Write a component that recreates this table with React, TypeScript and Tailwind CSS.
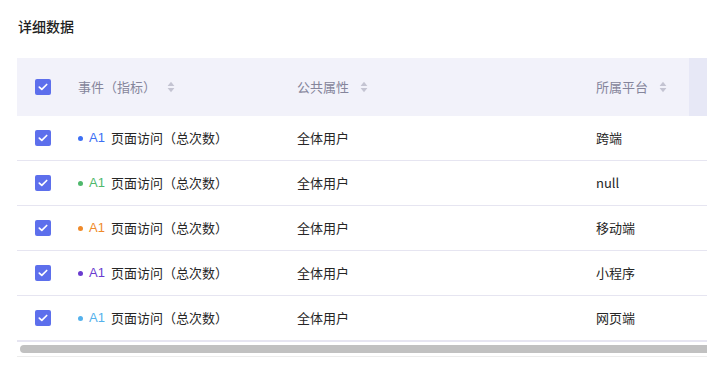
import React from 'react';

const font = { fontFamily: '"PingFang SC", "Noto Sans CJK SC", "Liberation Sans", sans-serif' };

const Check = () => (
  <span className="flex h-4 w-4 items-center justify-center rounded-[2px] bg-[#5d6fec]">
    <svg width="10" height="8" viewBox="0 0 10 8" fill="none">
      <path d="M1.3 4.1 3.8 6.4 8.7 1.5" stroke="#fff" strokeWidth="1.7" strokeLinecap="round" strokeLinejoin="round" />
    </svg>
  </span>
);

const Sorter = () => (
  <svg width="8" height="12" viewBox="0 0 8 12" className="ml-[11px]">
    <path d="M4 0.8 7.4 5H0.6z" fill="#c4c4d2" />
    <path d="M4 11.2 7.4 7H0.6z" fill="#c4c4d2" />
  </svg>
);

const App = () => {
  const rows = [
    { color: 'text-[#3d6ff4]', dot: 'bg-[#3d6ff4]', platform: '跨端' },
    { color: 'text-[#4fb86c]', dot: 'bg-[#4fb86c]', platform: 'null' },
    { color: 'text-[#ef8a2a]', dot: 'bg-[#ef8a2a]', platform: '移动端' },
    { color: 'text-[#6a3ccf]', dot: 'bg-[#6a3ccf]', platform: '小程序' },
    { color: 'text-[#54b1ec]', dot: 'bg-[#54b1ec]', platform: '网页端' },
  ];

  return (
    <div className="h-[372px] w-[707px] overflow-hidden bg-white" style={font}>
      <h2 className="pl-[18px] pt-[16px] text-[14px] font-medium leading-[20px] text-[#1f1f1f]">详细数据</h2>

      <div className="ml-[17px] mt-[22px] overflow-hidden">
        <div className="flex h-[58px] items-center bg-[#f2f2fa] text-[13px] text-[#85859b]">
          <div className="flex w-[43px] shrink-0 justify-end pr-[9px]">
            <Check />
          </div>
          <div className="flex w-[219px] shrink-0 items-center pl-[18px]">
            事件（指标）
            <Sorter />
          </div>
          <div className="flex w-[299px] shrink-0 items-center pl-[18px]">
            公共属性
            <Sorter />
          </div>
          <div className="flex w-[111px] shrink-0 items-center pl-[18px]">
            所属平台
            <Sorter />
          </div>
          <div className="h-full flex-1 bg-[#e7e8f6]" />
        </div>

        {rows.map((row, i) => (
          <div key={i} className="flex h-[45px] items-center border-b border-[#e6e5f1] text-[13px] text-[#262626]">
            <div className="flex w-[43px] shrink-0 justify-end pr-[9px]">
              <Check />
            </div>
            <div className="flex w-[219px] shrink-0 items-center pl-[18px]">
              <span className={`mr-[6px] h-[5px] w-[5px] rounded-full ${row.dot}`} />
              <span className={`mr-[6px] ${row.color}`} style={{ fontFamily: '"Liberation Sans", sans-serif' }}>A1</span>
              页面访问（总次数）
            </div>
            <div className="w-[299px] shrink-0 pl-[18px]">全体用户</div>
            <div className="flex-1 pl-[18px]">{row.platform}</div>
          </div>
        ))}

        <div className="border-t border-[#e6e5f1] border-b border-b-[#ececec] py-[3px]">
          <div className="ml-[3px] h-[8px] rounded-l-full bg-[#c1c1c1]" />
        </div>
      </div>
    </div>
  );
};

export default App;
